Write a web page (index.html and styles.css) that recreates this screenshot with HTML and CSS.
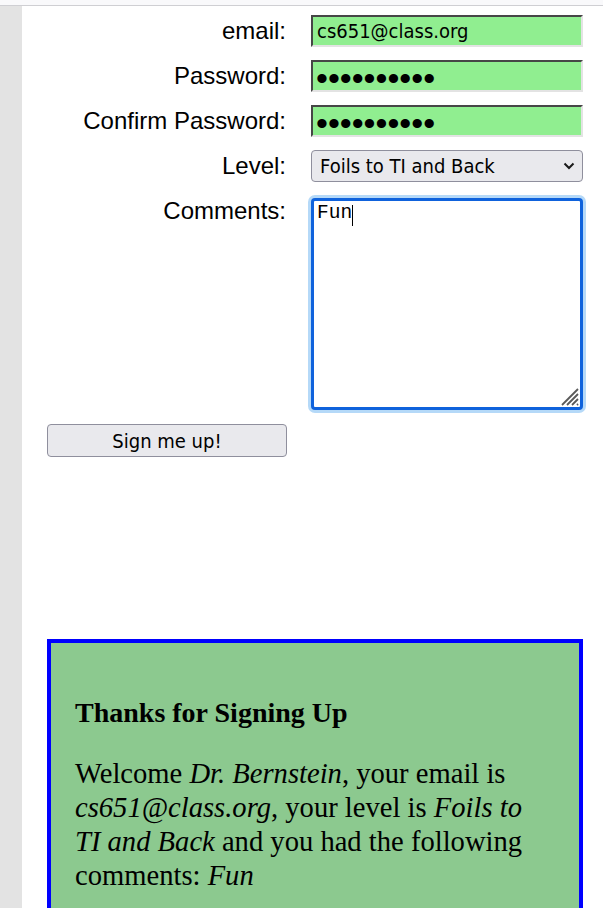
FILE: index.html
```html
<!DOCTYPE html>
<html lang="en">
<head>
    <meta charset="UTF-8">
    <meta name="viewport" content="width=device-width, initial-scale=1.0">
    <title>Sign Up</title>
    <link rel="stylesheet" href="styles.css">
</head>
<body>
    <div class="topbar"></div>
    <div class="page">
        <div class="gutter"></div>
        <main class="content">
            <form class="signup">
                <label for="email">email:</label>
                <input type="email" id="email" class="field" value="cs651@class.org">

                <label for="pw">Password:</label>
                <input type="password" id="pw" class="field secret" value="secret1234">

                <label for="pw2">Confirm Password:</label>
                <input type="password" id="pw2" class="field secret" value="secret1234">

                <label for="level">Level:</label>
                <div class="select-wrap">
                    <select id="level" class="picker">
                        <option>Foils to TI and Back</option>
                        <option>Beginner</option>
                        <option>Advanced</option>
                    </select>
                    <svg class="chevron" width="12" height="8" viewBox="0 0 12 8">
                        <path d="M1.5 1.5 L6 6 L10.5 1.5" fill="none" stroke="#1a1a1a" stroke-width="2"/>
                    </svg>
                </div>

                <label for="comments">Comments:</label>
                <div class="notes-wrap">
                    <textarea id="comments" class="notes">Fun</textarea>
                    <span class="caret"></span>
                    <!-- resize grip -->
                    <svg class="grip" width="20" height="20" viewBox="0 0 20 20">
                        <path d="M19 3 L3 19 M19 8 L8 19 M19 13 L13 19 M19 18 L18 19" stroke="#5a5a5a" stroke-width="1.8"/>
                    </svg>
                </div>

                <button type="button" class="submit">Sign me up!</button>
            </form>

            <section class="result">
                <h3>Thanks for Signing Up</h3>
                <p>Welcome <em>Dr. Bernstein</em>, your email is <em>cs651@class.org</em>, your level is <em>Foils to TI and Back</em> and you had the following comments: <em>Fun</em></p>
            </section>
        </main>
    </div>
</body>
</html>
```

FILE: styles.css
```css
/* Base */
* {
    box-sizing: border-box;
}

body {
    margin: 0;
    font-family: "Liberation Sans", Arial, sans-serif;
    color: #000;
    background: #fff;
}

.topbar {
    height: 6px;
    background: #f9f9fb;
    border-bottom: 1px solid #cfcfd3;
}

.page {
    display: flex;
    min-height: 902px;
}

.gutter {
    width: 22px;
    flex-shrink: 0;
    background: #e3e3e3;
}

.content {
    flex: 1;
    padding: 9px 20px 0 25px;
}

/* Form */
.signup {
    display: grid;
    grid-template-columns: 239px 272px;
    column-gap: 25px;
    row-gap: 13px;
    align-items: start;
}

.signup label {
    font-size: 24px;
    line-height: 32px;
    text-align: right;
}

.field {
    height: 32px;
    width: 100%;
    margin: 0;
    padding: 0 4px;
    background: #90ee90;
    border: 2px inset #e3e3e3;
    border-top-color: #9a9a9a;
    border-left-color: #9a9a9a;
    font-family: "DejaVu Sans Condensed", "DejaVu Sans", sans-serif;
    font-size: 20px;
    color: #000;
}

.field.secret {
    font-family: "Liberation Sans", Arial, sans-serif;
    font-size: 34px;
    padding: 4px 3px 0;
}

.select-wrap {
    position: relative;
    height: 32px;
}

.picker {
    appearance: none;
    width: 100%;
    height: 32px;
    margin: 0;
    padding: 0 30px 0 8px;
    background: #e9e9ed;
    border: 1px solid #8f8f9d;
    border-radius: 4px;
    font-family: "DejaVu Sans Condensed", "DejaVu Sans", sans-serif;
    font-size: 20px;
    color: #000;
}

.chevron {
    position: absolute;
    right: 8px;
    top: 12px;
    pointer-events: none;
}

.notes-wrap {
    position: relative;
    width: 272px;
    margin-top: 3px;
}

.notes {
    display: block;
    width: 272px;
    height: 212px;
    margin: 0;
    padding: 1px 3px;
    border: 3px solid #0f62dc;
    border-radius: 4px;
    box-shadow: 0 0 0 3px #b5d9f8;
    outline: none;
    resize: none;
    font-family: "Liberation Mono", "Courier New", monospace;
    font-size: 19.5px;
    color: #000;
    background: #fff;
}

.caret {
    position: absolute;
    left: 41px;
    top: 7px;
    width: 1px;
    height: 21px;
    background: #000;
}

.grip {
    position: absolute;
    right: 4px;
    bottom: 4px;
    pointer-events: none;
}

.submit {
    grid-column: 1;
    justify-self: start;
    width: 240px;
    height: 33px;
    margin-top: 1px;
    padding: 0;
    background: #e9e9ed;
    border: 1px solid #8f8f9d;
    border-radius: 4px;
    font-family: "DejaVu Sans Condensed", "DejaVu Sans", sans-serif;
    font-size: 20px;
    color: #000;
}

/* Confirmation box */
.result {
    margin-top: 182px;
    padding: 26px 30px 0 24px;
    min-height: 300px;
    background: #8cc98f;
    border: 4px solid #0000ff;
    font-family: "Liberation Serif", "Times New Roman", serif;
}

.result h3 {
    font-size: 28px;
    margin: 28px 0;
}

.result p {
    font-size: 28.6px;
    line-height: 34px;
    margin: 28px 0;
}
```
